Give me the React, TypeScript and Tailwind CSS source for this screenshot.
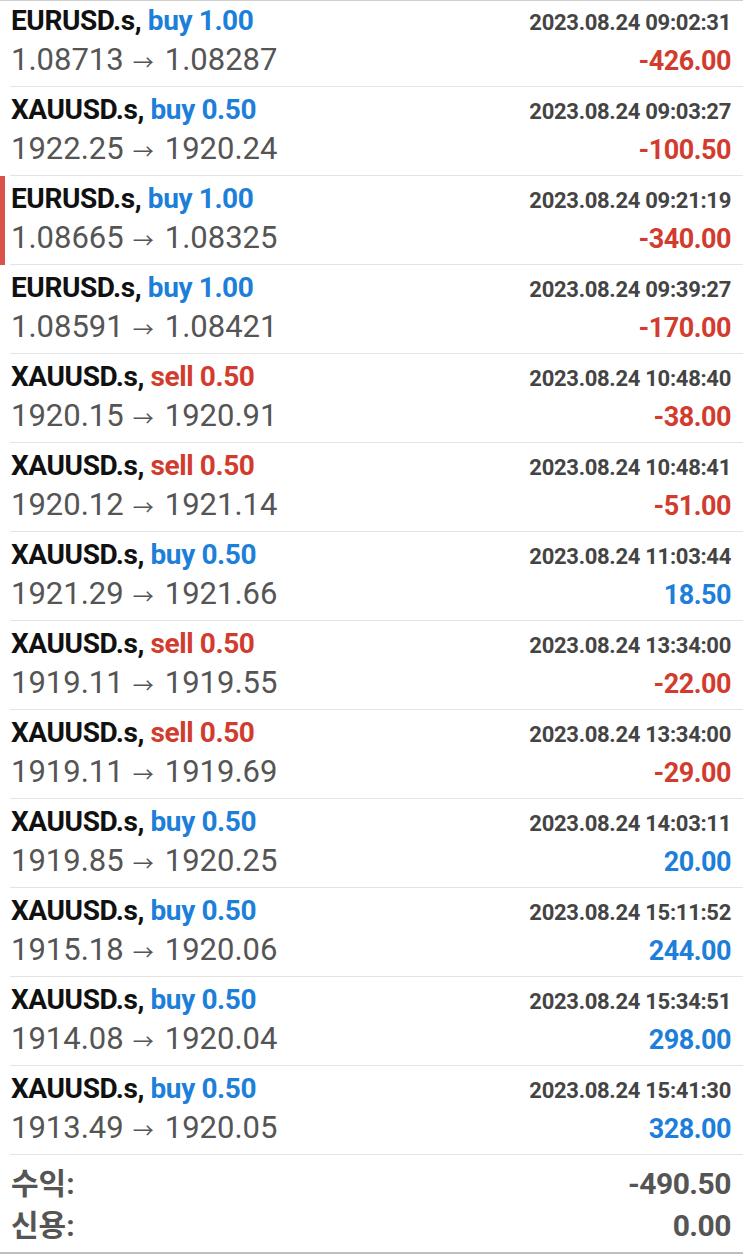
import React from "react";

type Deal = {
  symbol: string;
  side: "buy" | "sell";
  volume: string;
  open: string;
  close: string;
  time: string;
  profit: string;
  marked?: boolean;
};

const deals: Deal[] = [
  { symbol: "EURUSD.s", side: "buy", volume: "1.00", open: "1.08713", close: "1.08287", time: "2023.08.24 09:02:31", profit: "-426.00" },
  { symbol: "XAUUSD.s", side: "buy", volume: "0.50", open: "1922.25", close: "1920.24", time: "2023.08.24 09:03:27", profit: "-100.50" },
  { symbol: "EURUSD.s", side: "buy", volume: "1.00", open: "1.08665", close: "1.08325", time: "2023.08.24 09:21:19", profit: "-340.00", marked: true },
  { symbol: "EURUSD.s", side: "buy", volume: "1.00", open: "1.08591", close: "1.08421", time: "2023.08.24 09:39:27", profit: "-170.00" },
  { symbol: "XAUUSD.s", side: "sell", volume: "0.50", open: "1920.15", close: "1920.91", time: "2023.08.24 10:48:40", profit: "-38.00" },
  { symbol: "XAUUSD.s", side: "sell", volume: "0.50", open: "1920.12", close: "1921.14", time: "2023.08.24 10:48:41", profit: "-51.00" },
  { symbol: "XAUUSD.s", side: "buy", volume: "0.50", open: "1921.29", close: "1921.66", time: "2023.08.24 11:03:44", profit: "18.50" },
  { symbol: "XAUUSD.s", side: "sell", volume: "0.50", open: "1919.11", close: "1919.55", time: "2023.08.24 13:34:00", profit: "-22.00" },
  { symbol: "XAUUSD.s", side: "sell", volume: "0.50", open: "1919.11", close: "1919.69", time: "2023.08.24 13:34:00", profit: "-29.00" },
  { symbol: "XAUUSD.s", side: "buy", volume: "0.50", open: "1919.85", close: "1920.25", time: "2023.08.24 14:03:11", profit: "20.00" },
  { symbol: "XAUUSD.s", side: "buy", volume: "0.50", open: "1915.18", close: "1920.06", time: "2023.08.24 15:11:52", profit: "244.00" },
  { symbol: "XAUUSD.s", side: "buy", volume: "0.50", open: "1914.08", close: "1920.04", time: "2023.08.24 15:34:51", profit: "298.00" },
  { symbol: "XAUUSD.s", side: "buy", volume: "0.50", open: "1913.49", close: "1920.05", time: "2023.08.24 15:41:30", profit: "328.00" },
];

function DealRow({ deal, first }: { deal: Deal; first: boolean }) {
  const loss = deal.profit.startsWith("-");
  return (
    <div className={`flex ${first ? "h-[86px]" : "h-[89px]"}`}>
      <div className={`w-[5px] ${deal.marked ? "bg-[#d9534a]" : ""}`} />
      <div className="ml-[5px] flex flex-1 flex-col justify-end border-b border-[#e4e4e4] pb-[11px] pl-[1px] pr-[12px]">
        <div className="flex h-[36px] items-baseline justify-between">
          <span className="text-[28px] font-bold tracking-[-0.4px] text-[#111]">
            {deal.symbol},{" "}
            <span className={deal.side === "buy" ? "text-[#1d7fd9]" : "text-[#d23c2e]"}>
              {deal.side} {deal.volume}
            </span>
          </span>
          <span className="text-[22px] font-bold tracking-[-0.3px] text-[#444]">{deal.time}</span>
        </div>
        <div className="mt-[1px] flex h-[38px] items-baseline justify-between">
          <span className="text-[31px] font-normal text-[#555]">
            {deal.open}
            <span className="ml-[9px] mr-[11px] text-[21px]">→</span>
            {deal.close}
          </span>
          <span className={`text-[27px] font-bold tracking-[-0.5px] ${loss ? "text-[#d23c2e]" : "text-[#1d7fd9]"}`}>
            {deal.profit}
          </span>
        </div>
      </div>
    </div>
  );
}

export default function App() {
  return (
    <div className="h-[1256px] w-[743px] overflow-hidden bg-white font-['Roboto','Noto_Sans_CJK_KR',sans-serif]">
      <div className="border-t border-[#cfcfcf]">
        {deals.map((deal, i) => (
          <DealRow key={i} deal={deal} first={i === 0} />
        ))}
      </div>
      <div className="border-b-2 border-[#bdbdbd] pb-[6px] pl-[11px] pr-[12px] pt-[7px] text-[#555]">
        <div className="flex h-[42px] items-center justify-between">
          <span className="text-[30px] font-bold">수익:</span>
          <span className="text-[30px] font-bold tracking-[-0.5px]">-490.50</span>
        </div>
        <div className="flex h-[42px] items-center justify-between">
          <span className="text-[30px] font-bold">신용:</span>
          <span className="text-[30px] font-bold tracking-[-0.5px]">0.00</span>
        </div>
      </div>
    </div>
  );
}
